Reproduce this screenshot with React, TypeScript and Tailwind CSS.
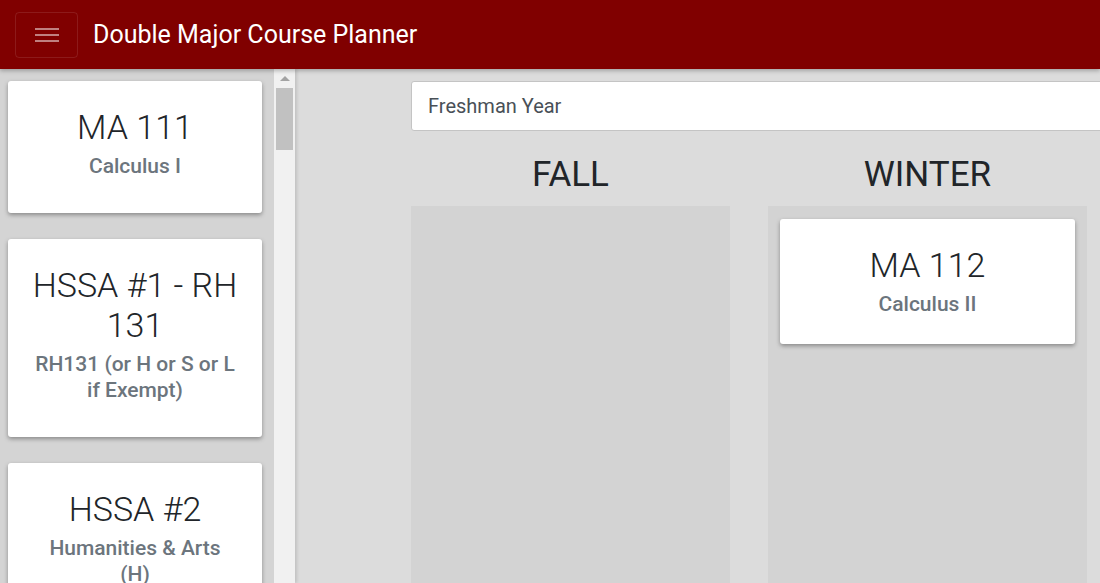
import React from 'react'

const sidebarCourses = [
  { code: 'MA 111', name: 'Calculus I' },
  { code: 'HSSA #1 - RH 131', name: 'RH131 (or H or S or L if Exempt)' },
  { code: 'HSSA #2', name: 'Humanities & Arts (H)' },
  { code: 'PH 111', name: 'Physics I' },
]

type Course = { code: string; name: string }

const terms: { title: string; courses: Course[] }[] = [
  { title: 'FALL', courses: [] },
  { title: 'WINTER', courses: [{ code: 'MA 112', name: 'Calculus II' }] },
  { title: 'SPRING', courses: [] },
]

function CourseCard({ course, tight }: { course: Course; tight?: boolean }) {
  return (
    <div
      className={`bg-white rounded-[3px] shadow-[0_2px_4px_rgba(0,0,0,0.35)] px-[26px] pt-[26px] text-center ${
        tight ? 'pb-[27px]' : 'pb-[34px]'
      }`}
    >
      <div className="-mx-1 text-[34px] leading-[40px] font-light text-[#212529]">{course.code}</div>
      <div className="mt-[6px] text-[21px] leading-[26px] font-medium text-[#6c757d]">{course.name}</div>
    </div>
  )
}

export default function App() {
  return (
    <div
      className="h-[583px] w-[1100px] overflow-hidden flex flex-col bg-[#dcdcdc]"
      style={{ fontFamily: 'Roboto, "Liberation Sans", sans-serif' }}
    >
      {/* Header */}
      <header className="relative z-10 h-[69px] shrink-0 bg-[#800000] flex items-center pl-[15px] gap-[15px] shadow-[0_2px_4px_rgba(0,0,0,0.25)]">
        <button className="w-[63px] h-[46px] rounded-[4px] border border-white/10 flex flex-col items-center justify-center gap-[4px]">
          <span className="block w-[24px] h-[2px] bg-white/50" />
          <span className="block w-[24px] h-[2px] bg-white/50" />
          <span className="block w-[24px] h-[2px] bg-white/50" />
        </button>
        <h1 className="text-[25px] text-white font-normal">Double Major Course Planner</h1>
      </header>

      <div className="flex flex-1 min-h-0">
        {/* Sidebar */}
        <aside className="flex shrink-0 shadow-[2px_0_3px_rgba(0,0,0,0.12)] z-[1]">
          <div className="w-[274px] bg-[#d4d4d4] pl-2 pr-3 pt-3 flex flex-col gap-[26px] overflow-hidden">
            {sidebarCourses.map((c) => (
              <CourseCard key={c.code} course={c} />
            ))}
          </div>
          {/* Scrollbar */}
          <div className="w-[21px] bg-[#f1f1f1] flex flex-col items-center pt-[7px]">
            <div className="w-0 h-0 border-l-[5px] border-r-[5px] border-b-[5px] border-l-transparent border-r-transparent border-b-[#a3a3a3]" />
            <div className="mt-[7px] w-[17px] h-[62px] bg-[#c1c1c1]" />
          </div>
        </aside>

        {/* Main */}
        <main className="flex-1 overflow-hidden pl-[116px] pt-3">
          <div className="w-[1750px]">
            <div className="h-[50px] bg-white border border-[#c4c4c4] rounded-[3px] flex items-center px-4 text-[20px] text-[#495057]">
              Freshman Year
            </div>
            <div className="flex gap-[38px]">
              {terms.map((t) => (
                <div key={t.title} className="w-[319px] flex flex-col">
                  <h2 className="pt-6 pb-[11px] text-center text-[35px] leading-[40px] font-normal text-[#212529]">
                    {t.title}
                  </h2>
                  <div className="h-[400px] bg-[#d3d3d3] px-3 pt-[13px] flex flex-col gap-3">
                    {t.courses.map((c) => (
                      <CourseCard key={c.code} course={c} tight />
                    ))}
                  </div>
                </div>
              ))}
            </div>
          </div>
        </main>
      </div>
    </div>
  )
}
